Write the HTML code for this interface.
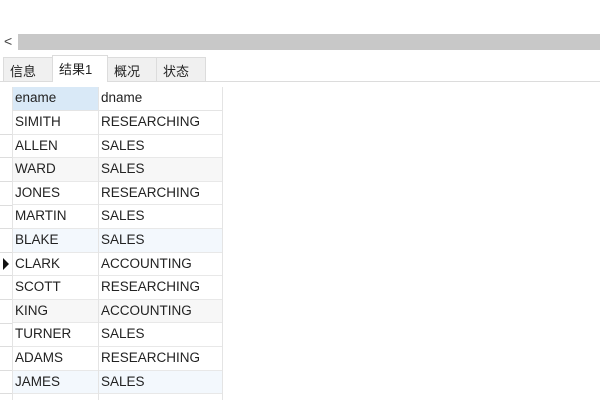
<!DOCTYPE html>
<html><head><style>
body{margin:0;width:600px;height:400px;background:#fff;position:relative;overflow:hidden;font-family:"Liberation Sans","Noto Sans CJK SC",sans-serif;font-size:13.5px;color:#222}
.a{position:absolute}
.sb{left:18px;top:34px;width:582px;height:16px;background:#c8c8c8}
.tab{top:57px;height:24px;background:#f0f0f0;border:1px solid #dcdcdc;border-bottom:none;box-sizing:border-box;padding:2px 0 0 6px;font-size:13px}
.row{left:12px;width:210px;height:23.6px;border-bottom:1px solid #e8e8e8;box-sizing:border-box}
.c1{position:absolute;left:3px;top:3px}
.c2{position:absolute;left:89px;top:3px}
.vl{top:87px;width:1px;height:313px;background:#e4e4e4}
.gl{left:0;width:12px;height:1px;background:#ddd}
</style></head><body>
<div class="a sb"></div>
<div class="a" style="left:4px;top:33px;font-size:14px;color:#444">&lt;</div>
<div class="a" style="left:0;top:81px;width:600px;height:1px;background:#dcdcdc"></div>
<div class="a tab" style="left:3px;width:50px;padding-top:3px">信息</div>
<div class="a tab" style="left:52px;top:55px;height:27px;width:56px;background:#fff;padding-top:3px">结果1</div>
<div class="a tab" style="left:107px;width:50px;padding-top:3px">概况</div>
<div class="a tab" style="left:156px;width:50px;padding-top:3px">状态</div>
<div class="a" style="left:12px;top:87px;width:86px;height:24px;background:#d9e9f7"></div>
<div class="a" style="left:15px;top:90px">ename</div>
<div class="a" style="left:101px;top:90px">dname</div>
<div class="a" style="left:12px;top:110px;width:210px;height:1px;background:#e4e4e4"></div>
<div class="a" style="left:3px;top:258px;width:0;height:0;border-left:6px solid #111;border-top:6px solid transparent;border-bottom:6px solid transparent"></div>
<div class="a row" style="top:111px"><span class="c1">SIMITH</span><span class="c2">RESEARCHING</span></div>
<div class="a row" style="top:134.6px"><span class="c1">ALLEN</span><span class="c2">SALES</span></div>
<div class="a row" style="top:158.2px;background:#f7f7f7"><span class="c1">WARD</span><span class="c2">SALES</span></div>
<div class="a row" style="top:181.8px"><span class="c1">JONES</span><span class="c2">RESEARCHING</span></div>
<div class="a row" style="top:205.4px"><span class="c1">MARTIN</span><span class="c2">SALES</span></div>
<div class="a row" style="top:229px;background:#f3f8fd"><span class="c1">BLAKE</span><span class="c2">SALES</span></div>
<div class="a row" style="top:252.6px"><span class="c1">CLARK</span><span class="c2">ACCOUNTING</span></div>
<div class="a row" style="top:276.2px"><span class="c1">SCOTT</span><span class="c2">RESEARCHING</span></div>
<div class="a row" style="top:299.8px;background:#f7f7f7"><span class="c1">KING</span><span class="c2">ACCOUNTING</span></div>
<div class="a row" style="top:323.4px"><span class="c1">TURNER</span><span class="c2">SALES</span></div>
<div class="a row" style="top:347px"><span class="c1">ADAMS</span><span class="c2">RESEARCHING</span></div>
<div class="a row" style="top:370.6px;background:#f3f8fd"><span class="c1">JAMES</span><span class="c2">SALES</span></div>
<div class="a vl" style="left:12px"></div>
<div class="a vl" style="left:98px"></div>
<div class="a vl" style="left:222px"></div>
<div class="a gl" style="top:134px"></div><div class="a gl" style="top:157px"></div><div class="a gl" style="top:181px"></div><div class="a gl" style="top:205px"></div><div class="a gl" style="top:228px"></div><div class="a gl" style="top:252px"></div><div class="a gl" style="top:275px"></div><div class="a gl" style="top:299px"></div><div class="a gl" style="top:323px"></div><div class="a gl" style="top:346px"></div><div class="a gl" style="top:370px"></div><div class="a gl" style="top:393px"></div>
</body></html>
